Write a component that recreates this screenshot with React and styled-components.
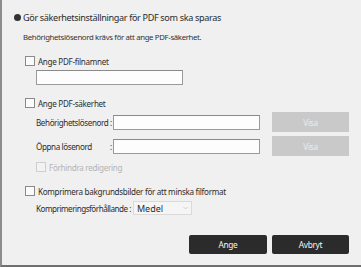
import styled, { createGlobalStyle } from "styled-components";

const GlobalStyle = createGlobalStyle`
  body {
    margin: 0;
    font-family: "Noto Sans", "Liberation Sans", sans-serif;
    background: #f0f0f0;
  }
`;

const Dialog = styled.div`
  width: 361px;
  height: 267px;
  box-sizing: border-box;
  display: flex;
  flex-direction: column;
  background: #f0f0f0;
  border-left: 2px solid #8c8c8c;
  border-bottom: 2px solid #6f6f6f;
  padding: 10px 12px 11px 11px;
  color: #333;
  white-space: nowrap;
  letter-spacing: -0.3px;
`;

const Title = styled.div`
  display: flex;
  align-items: center;
  gap: 2px;
  height: 15px;
  font-size: 9.1px;
  letter-spacing: -0.35px;
  color: #2b2b2b;
`;

const Bullet = styled.span`
  width: 7px;
  height: 7px;
  margin-left: 1px;
  border-radius: 50%;
  background: #333;
`;

const Note = styled.div`
  margin: 6px 0 0 10px;
  height: 12px;
  line-height: 12px;
  font-size: 7.8px;
  letter-spacing: -0.35px;
  color: #333;
`;

const CheckRow = styled.label`
  display: flex;
  align-items: center;
  gap: 3px;
  height: 10px;
  margin: ${(p) => p.$top}px 0 0 ${(p) => p.$left}px;
  font-size: 8.1px;
  color: ${(p) => (p.$disabled ? "#b4b4b4" : "#2e2e2e")};
`;

const Box = styled.span`
  width: 10px;
  height: 10px;
  box-sizing: border-box;
  border: 1px solid ${(p) => (p.$disabled ? "#cfcfcf" : "#8a8a8a")};
  background: ${(p) => (p.$disabled ? "#f2f2f2" : "#fbfbfb")};
`;

const TextInput = styled.div`
  box-sizing: border-box;
  width: 147px;
  height: 15px;
  background: #fdfdfd;
  border: 1px solid #9a9a9a;
  border-top-color: #8a8a8a;
`;

const FileInput = styled(TextInput)`
  margin: 4px 0 0 23px;
`;

const FieldRow = styled.div`
  display: grid;
  grid-template-columns: 74px 3px 147px 77px;
  align-items: center;
  height: 20px;
  margin: ${(p) => p.$top}px 0 0 23px;
  font-size: 8.1px;
  letter-spacing: -0.4px;
  color: #2e2e2e;

  & > :last-child {
    margin-left: 12px;
  }
`;

const GhostButton = styled.div`
  width: 77px;
  height: 20px;
  display: flex;
  align-items: center;
  justify-content: center;
  background: #c9c9c9;
  color: #ededed;
  font-size: 8px;
  letter-spacing: -0.2px;
`;

const SelectRow = styled.div`
  display: flex;
  align-items: center;
  gap: 2px;
  height: 14px;
  margin: 5px 0 0 23px;
  font-size: 8.1px;
  letter-spacing: -0.48px;
  color: #2e2e2e;
`;

const Select = styled.div`
  box-sizing: border-box;
  width: 59px;
  height: 14px;
  display: flex;
  align-items: center;
  justify-content: space-between;
  padding: 0 3px 0 3px;
  background: #f5f5f5;
  border: 1px solid #dadada;
  font-size: 9px;
  letter-spacing: 0;
  color: #2b2b2b;
`;

const Footer = styled.div`
  margin-top: auto;
  display: flex;
  justify-content: flex-end;
  gap: 5px;
`;

const DarkButton = styled.div`
  width: ${(p) => p.$w}px;
  height: 19px;
  display: flex;
  align-items: center;
  justify-content: center;
  background: #2b2b2b;
  border-radius: 2px;
  color: #f4f4f4;
  font-size: 8.3px;
`;

const Check = ({ label, top, left, disabled }) => (
  <CheckRow $top={top} $left={left} $disabled={disabled}>
    <Box $disabled={disabled} />
    {label}
  </CheckRow>
);

export default function App() {
  return (
    <>
      <GlobalStyle />
      <Dialog>
        <Title>
          <Bullet />
          Gör säkerhetsinställningar för PDF som ska sparas
        </Title>
        <Note>Behörighetslösenord krävs för att ange PDF-säkerhet.</Note>

        <Check label="Ange PDF-filnamnet" top={13} left={12} />
        <FileInput />

        <Check label="Ange PDF-säkerhet" top={13} left={12} />
        <FieldRow $top={4}>
          <span>Behörighetslösenord</span>
          <span>:</span>
          <TextInput />
          <GhostButton>Visa</GhostButton>
        </FieldRow>
        <FieldRow $top={4}>
          <span>Öppna lösenord</span>
          <span>:</span>
          <TextInput />
          <GhostButton>Visa</GhostButton>
        </FieldRow>
        <Check label="Förhindra redigering" top={6} left={23} disabled />

        <Check
          label="Komprimera bakgrundsbilder för att minska filformat"
          top={14}
          left={12}
        />
        <SelectRow>
          <span>Komprimeringsförhållande :</span>
          <Select>
            Medel
            <svg width="5" height="4" viewBox="0 0 5 4">
              <path d="M0.5 1 L2.5 3 L4.5 1" fill="none" stroke="#c4c4c4" strokeWidth="0.8" />
            </svg>
          </Select>
        </SelectRow>

        <Footer>
          <DarkButton $w={78}>Ange</DarkButton>
          <DarkButton $w={77}>Avbryt</DarkButton>
        </Footer>
      </Dialog>
    </>
  );
}
